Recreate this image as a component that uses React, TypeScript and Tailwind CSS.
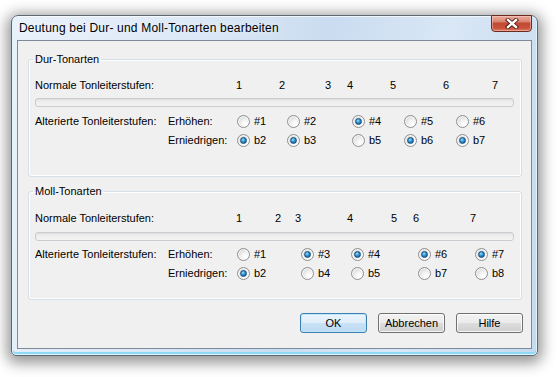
import React from 'react';

type Choice = { label: string; on: boolean };

type ScaleGroup = {
  title: string;
  numbers: number[];
  columns: number[];
  raise: Choice[];
  lower: Choice[];
  height: string;
  normalTop: string;
  troughTop: string;
  altTop: string;
};

// x-Positionen aus dem Dialog, Ursprung = linker Rand des Gruppeninhalts
const CONTENT_LEFT = 35;

const groups: ScaleGroup[] = [
  {
    title: 'Dur-Tonarten',
    numbers: [236, 279, 325, 347, 390, 443, 492],
    columns: [237, 287, 352, 404, 456],
    raise: [
      { label: '#1', on: false },
      { label: '#2', on: false },
      { label: '#4', on: true },
      { label: '#5', on: false },
      { label: '#6', on: false }
    ],
    lower: [
      { label: 'b2', on: true },
      { label: 'b3', on: true },
      { label: 'b5', on: false },
      { label: 'b6', on: true },
      { label: 'b7', on: true }
    ],
    height: 'h-[124px]',
    normalTop: 'mt-[13px]',
    troughTop: 'mt-[6px]',
    altTop: 'mt-[8px]'
  },
  {
    title: 'Moll-Tonarten',
    numbers: [236, 275, 295, 347, 391, 413, 470],
    columns: [237, 301, 351, 418, 475],
    raise: [
      { label: '#1', on: false },
      { label: '#3', on: true },
      { label: '#4', on: true },
      { label: '#6', on: true },
      { label: '#7', on: true }
    ],
    lower: [
      { label: 'b2', on: true },
      { label: 'b4', on: false },
      { label: 'b5', on: false },
      { label: 'b7', on: false },
      { label: 'b8', on: false }
    ],
    height: 'h-[115px]',
    normalTop: 'mt-[14px]',
    troughTop: 'mt-[7px]',
    altTop: 'mt-[7px]'
  }
];

function Radio({ on }: { on: boolean }) {
  return (
    <span className="flex h-[13px] w-[13px] shrink-0 items-center justify-center rounded-full border border-[#8e8f8f] bg-[radial-gradient(circle_at_65%_70%,#ffffff_10%,#e6e6e6_55%,#c9c9c9)] shadow-[inset_0_0_0_1px_rgba(255,255,255,0.8)]">
      {on && (
        <span className="h-[7px] w-[7px] rounded-full border border-[#174d7c] bg-[radial-gradient(circle_at_40%_35%,#9ee3fb,#2b8fd0_45%,#0c4a86)]" />
      )}
    </span>
  );
}

function RadioRow({
  first,
  second,
  choices,
  columns
}: {
  first: string;
  second: string;
  choices: Choice[];
  columns: number[];
}) {
  return (
    <div className="flex h-[13px] items-center">
      <span className="w-[133px] shrink-0 whitespace-nowrap">{first}</span>
      <span className="w-[69px] shrink-0 whitespace-nowrap">{second}</span>
      {choices.map((c, i) => (
        <span
          key={c.label}
          className="flex shrink-0 items-center gap-[4px]"
          style={{ width: i < columns.length - 1 ? columns[i + 1] - columns[i] : undefined }}
        >
          <Radio on={c.on} />
          <span>{c.label}</span>
        </span>
      ))}
    </div>
  );
}

function GroupBox({ group }: { group: ScaleGroup }) {
  return (
    <fieldset
      className={`ml-[10px] mr-[9px] rounded-[3px] border border-[#d5dfe5] pl-[6px] pr-[7px] shadow-[inset_0_0_0_1px_#ffffff] ${group.height}`}
    >
      <legend className="-ml-[2px] px-[2px] leading-[13px]">{group.title}</legend>
      <div className={`flex h-[13px] items-center ${group.normalTop}`}>
        <span className="shrink-0 whitespace-nowrap" style={{ width: group.numbers[0] - CONTENT_LEFT }}>
          Normale Tonleiterstufen:
        </span>
        {group.numbers.map((n, i) => (
          <span
            key={n}
            className="shrink-0"
            style={{ width: i < group.numbers.length - 1 ? group.numbers[i + 1] - n : undefined }}
          >
            {i + 1}
          </span>
        ))}
      </div>
      <div
        className={`h-[9px] rounded-[3px] border border-[#c9cdd2] bg-[linear-gradient(#e9e9e9,#f4f4f4)] shadow-[inset_0_1px_1px_rgba(0,0,0,0.05)] ${group.troughTop}`}
      />
      <div className={`flex flex-col gap-[6px] ${group.altTop}`}>
        <RadioRow
          first="Alterierte Tonleiterstufen:"
          second="Erhöhen:"
          choices={group.raise}
          columns={group.columns}
        />
        <RadioRow first="" second="Erniedrigen:" choices={group.lower} columns={group.columns} />
      </div>
    </fieldset>
  );
}

function Button({ label, primary }: { label: string; primary?: boolean }) {
  return (
    <button
      className={
        primary
          ? 'h-[20px] w-[67px] rounded-[3px] border border-[#3c7fb1] bg-[linear-gradient(#eaf4fc_0%,#dfeefa_50%,#c9e2f6_51%,#bcdaf3_100%)] text-center shadow-[inset_0_0_0_1px_#bfe6fb]'
          : 'h-[20px] w-[67px] rounded-[3px] border border-[#707070] bg-[linear-gradient(#f2f2f2_0%,#ebebeb_50%,#dddddd_51%,#cfcfcf_100%)] text-center shadow-[inset_0_0_0_1px_rgba(255,255,255,0.8)]'
      }
    >
      {label}
    </button>
  );
}

function CloseButton() {
  return (
    <div className="absolute -top-[1px] right-[5px] flex h-[17px] w-[41px] items-center justify-center rounded-b-[4px] rounded-t-[1px] border border-[#6b2b21] bg-[linear-gradient(#eaa999_0%,#dc8a77_35%,#c24a33_50%,#c9523b_80%,#dd7a5f_100%)] shadow-[inset_0_0_0_1px_rgba(255,220,210,0.45)]">
      <svg width="14" height="11" viewBox="0 0 14 11">
        <path d="M3 2 L11 9 M11 2 L3 9" stroke="#4a1a12" strokeWidth="4.2" strokeLinecap="square" />
        <path d="M3 2 L11 9 M11 2 L3 9" stroke="#ffffff" strokeWidth="2.4" strokeLinecap="square" />
      </svg>
    </div>
  );
}

export default function App() {
  return (
    <div className="h-[377px] w-[558px] overflow-hidden bg-white pl-[11px] pt-[15px] font-['Liberation_Sans',Arial,sans-serif] text-[11px] leading-[13px] text-black">
      <div className="relative flex h-[341px] w-[527px] flex-col rounded-b-[5px] rounded-t-[7px] border border-[#5d6874] bg-[linear-gradient(100deg,#e9f1fa_0%,#dde9f7_30%,#cadcf0_55%,#d9e7f6_75%,#c6daef_100%)] px-[5px] pb-[6px] shadow-[0_3px_14px_4px_rgba(0,0,0,0.42),inset_0_0_0_1px_rgba(255,255,255,0.7),inset_0_-2px_0_1px_#8fdaf6]">
        <div className="flex h-[24px] items-center pl-[2px]">
          <span className="text-[12px] leading-[15px] tracking-[0.2px] text-black [text-shadow:0_0_8px_rgba(255,255,255,0.9)]">
            Deutung bei Dur- und Moll-Tonarten bearbeiten
          </span>
        </div>
        <CloseButton />
        <div className="flex flex-1 flex-col border border-[#7c8a99] bg-[#f0f0f0]">
          <div className="mt-[12px]">
            <GroupBox group={groups[0]} />
          </div>
          <div className="mt-[8px]">
            <GroupBox group={groups[1]} />
          </div>
          <div className="mr-[8px] mt-[13px] flex justify-end gap-[11px]">
            <Button label="OK" primary />
            <Button label="Abbrechen" />
            <Button label="Hilfe" />
          </div>
        </div>
      </div>
    </div>
  );
}
